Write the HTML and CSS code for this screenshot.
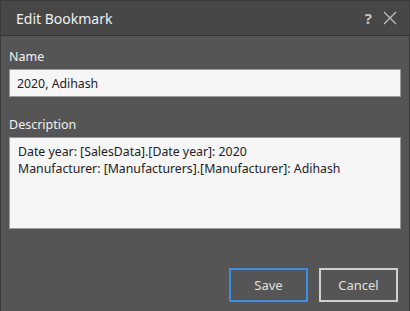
FILE: index.html
```html
<!DOCTYPE html>
<html lang="en">
<head>
<meta charset="UTF-8">
<title>Edit Bookmark</title>
<link rel="stylesheet" href="styles.css">
</head>
<body>
<div class="dialog">
  <div class="titlebar">
    <span class="title">Edit Bookmark</span>
    <div class="actions">
      <span class="help">?</span>
      <svg class="close" width="14" height="14" viewBox="0 0 14 14"><path d="M1 1L13 13M13 1L1 13" stroke="#bdbdbd" stroke-width="1.3" fill="none"/></svg>
    </div>
  </div>
  <div class="body">
    <label class="field">Name
      <input class="input" type="text" value="2020, Adihash">
    </label>
    <label class="field desc">Description
      <textarea class="input area">Date year: [SalesData].[Date year]: 2020
Manufacturer: [Manufacturers].[Manufacturer]: Adihash</textarea>
    </label>
    <div class="buttons">
      <button class="btn primary">Save</button>
      <button class="btn">Cancel</button>
    </div>
  </div>
</div>
</body>
</html>
```

FILE: styles.css
```css
body{margin:0;background:#555;font-family:'Noto Sans','Open Sans',Arial,sans-serif;}
.dialog{width:410px;height:311px;box-sizing:border-box;border-left:1px solid #3a3a3a;border-top:1px solid #3a3a3a;border-right:1px solid #3a3a3a;background:#555;display:flex;flex-direction:column;}
.titlebar{height:34px;background:#474747;border-bottom:1px solid #333;display:flex;align-items:center;justify-content:space-between;padding:0 12px 0 15px;}
.title{color:#f0f0f0;font-size:14px;}
.actions{display:flex;align-items:center;gap:11px;}
.help{color:#c4c4c4;font-weight:bold;font-size:15px;}
.close{display:block;}
.body{padding:12px 8px 0 8px;display:flex;flex-direction:column;}
.field{color:#f2f2f2;font-size:12.5px;display:flex;flex-direction:column;gap:4px;}
.input{box-sizing:border-box;width:392px;height:28px;border:1px solid #9a9a9a;background:#f6f6f6;color:#222;font-family:inherit;font-size:12.3px;padding:0 7px;margin:0;outline:none;}
.desc{margin-top:19px;}
.area{height:92px;padding:5px 8px;resize:none;line-height:17px;overflow:hidden;}
.buttons{display:flex;justify-content:flex-end;gap:11px;margin-top:39px;padding-right:3px;}
.btn{width:79px;height:34px;box-sizing:border-box;background:transparent;border:2px solid #d0d0d0;color:#e0e0e0;font-family:inherit;font-size:13px;}
.btn.primary{border-color:#3a8ee6;}
```
